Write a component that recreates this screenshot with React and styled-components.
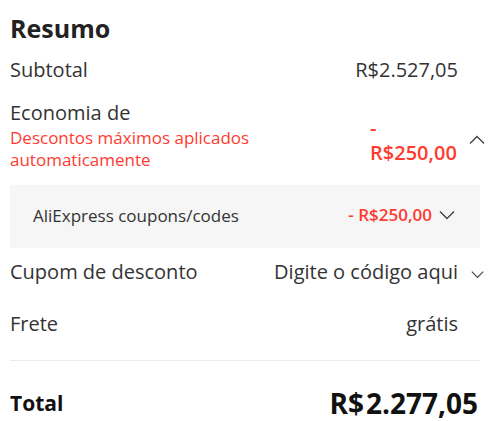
import React from 'react'
import styled, { createGlobalStyle } from 'styled-components';

const GlobalStyle = createGlobalStyle`
    body {
        margin: 0;
        background: #fff;
        font-family: "Open Sans", "Liberation Sans", sans-serif;
        color: #333;
    }
`;

const Panel = styled.div`
    width: 476px;
    padding: 12px 14px 0 10px;
`;

const Title = styled.h2`
    margin: 0 0 12px;
    font-size: 25px;
    font-weight: 700;
    line-height: 32px;
    color: #222;
`;

const Row = styled.div`
    display: flex;
    align-items: center;
    justify-content: space-between;
    margin: ${(p) => p.top || 0}px ${(p) => (p.inset ? 6 : 0)}px 0 0;
    padding: ${(p) => p.pad || 0};
    background: ${(p) => (p.shaded ? '#f6f6f6' : 'transparent')};
`;

const Label = styled.div`
    font-size: ${(p) => (p.small ? '17px' : '20px')};
    line-height: ${(p) => (p.small ? '23px' : '28px')};
    color: #333;
`;

const Note = styled.div`
    font-size: 17px;
    line-height: 22px;
    color: #ff3b30;
`;

const Right = styled.div`
    display: flex;
    align-items: center;
    padding-top: ${(p) => p.shift || 0}px;
`;

const Value = styled.div`
    font-size: ${(p) => (p.small ? '17px' : '20px')};
    line-height: ${(p) => (p.tight ? '25px' : '28px')};
    font-weight: ${(p) => (p.red ? 600 : 400)};
    color: ${(p) => (p.red ? '#ff3b30' : '#333')};
    text-align: right;
    ${(p) => p.wrap && 'width: 88px; text-align: left;'}
`;

const IconSlot = styled.span`
    display: inline-flex;
    align-items: center;
    justify-content: ${(p) => (p.end ? 'flex-end' : 'center')};
    width: ${(p) => p.w || 28}px;
    padding-top: ${(p) => p.drop || 0}px;
    padding-right: ${(p) => p.nudge || 0}px;
    box-sizing: border-box;
    color: #444;
`;

const Divider = styled.hr`
    border: 0;
    border-top: 1px solid #ececec;
    margin: 22px 6px 0 0;
`;

const TotalRow = styled.div`
    display: flex;
    align-items: center;
    justify-content: space-between;
    margin-top: 26px;
    padding-right: 8px;
    line-height: 32px;
`;

const TotalLabel = styled.div`
    font-size: 21px;
    font-weight: 700;
    color: #111;
`;

const TotalValue = styled.div`
    font-size: 28px;
    font-weight: 700;
    color: #111;
    span {
        margin-left: 2px;
    }
`;

function Chevron({ up, size = 14 }) {
    return (
        <svg width={size} height={size} viewBox="0 0 16 16" fill="none" stroke="currentColor" strokeWidth="1.4">
            {up ? <path d="M1 11.5 L8 4.5 L15 11.5" /> : <path d="M1 4.5 L8 11.5 L15 4.5" />}
        </svg>
    )
}

function App() {
    return (
        <>
            <GlobalStyle />
            <Panel>
                <Title>Resumo</Title>
                <Row>
                    <Label>Subtotal</Label>
                    <Right>
                        <Value>R$2.527,05</Value>
                        <IconSlot />
                    </Right>
                </Row>
                <Row top={15}>
                    <div>
                        <Label>Economia de</Label>
                        <Note>Descontos máximos aplicados<br />automaticamente</Note>
                    </div>
                    <Right shift={10}>
                        <Value red wrap tight>- R$250,00</Value>
                        <IconSlot end nudge={1}><Chevron up size={16} /></IconSlot>
                    </Right>
                </Row>
                <Row top={14} shaded inset pad="16px 18px 19px 23px">
                    <Label small>AliExpress coupons/codes</Label>
                    <Right>
                        <Value red small>- R$250,00</Value>
                        <IconSlot w={30}><Chevron size={16} /></IconSlot>
                    </Right>
                </Row>
                <Row top={10}>
                    <Label>Cupom de desconto</Label>
                    <Right>
                        <Value>Digite o código aqui</Value>
                        <IconSlot end drop={4} nudge={2}><Chevron size={13} /></IconSlot>
                    </Right>
                </Row>
                <Row top={24}>
                    <Label>Frete</Label>
                    <Right>
                        <Value>grátis</Value>
                        <IconSlot />
                    </Right>
                </Row>
                <Divider />
                <TotalRow>
                    <TotalLabel>Total</TotalLabel>
                    <TotalValue>R$<span>2.277,05</span></TotalValue>
                </TotalRow>
            </Panel>
        </>
    )
}

export default App;
